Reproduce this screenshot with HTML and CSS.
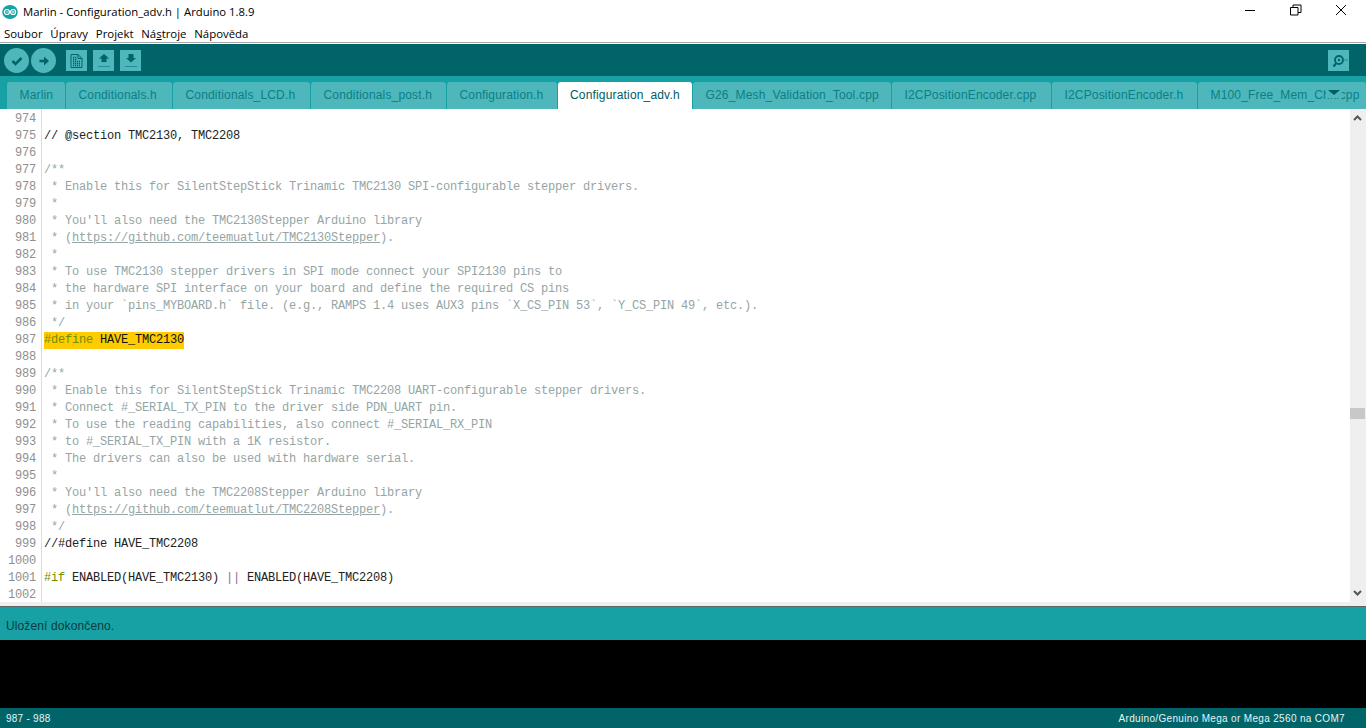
FILE: index.html
```html
<!DOCTYPE html>
<html lang="cs">
<head>
<meta charset="utf-8">
<title>Marlin - Configuration_adv.h | Arduino 1.8.9</title>
<link rel="stylesheet" href="styles.css">
</head>
<body>
<div class="app">
  <header class="titlebar">
    <svg class="logo" width="16" height="16" viewBox="0 0 16 16"><ellipse cx="8" cy="8" rx="7.800" ry="7" fill="#17a1a5"/><circle cx="4.900" cy="8" r="2.500" fill="none" stroke="#fff" stroke-width="1.200"/><circle cx="11.100" cy="8" r="2.500" fill="none" stroke="#fff" stroke-width="1.200"/><path d="M3.800 8h2.200M10 8h2.200M11.100 6.900v2.200" stroke="#fff" stroke-width=".8"/></svg>
    <span class="title">Marlin - Configuration_adv.h | Arduino 1.8.9</span>
    <div class="winbtns">
      <svg width="12" height="12" viewBox="0 0 12 12"><path d="M0 6.500h10" stroke="#000"/></svg>
      <svg width="12" height="12" viewBox="0 0 12 12"><path d="M.5 3.500h7.500v7.500H.5zM3 3.500V1h8v7.500H8" fill="none" stroke="#000"/></svg>
      <svg width="12" height="12" viewBox="0 0 12 12"><path d="M1 1l10 10M11 1L1 11" stroke="#000"/></svg>
    </div>
  </header>
  <nav class="menubar">
    <span>Soubor</span><span>Úpravy</span><span>Projekt</span><span>Ná<u>s</u>troje</span><span>Nápověda</span>
  </nav>
  <div class="toolbar">
    <button class="tool round"><svg width="12" height="12" viewBox="0 0 12 12"><path d="M1.500 6l3 3 6-6" fill="none" stroke="#006468" stroke-width="2.500"/></svg></button>
    <button class="tool round"><svg width="12" height="12" viewBox="0 0 12 12"><path d="M1.500 6h6" stroke="#006468" stroke-width="2.600"/><path d="M6 1.500L11 6l-5 4.500z" fill="#006468"/></svg></button>
    <button class="tool square first"><svg width="13" height="14" viewBox="0 0 13 14"><path d="M1 .5h7l4 4v9H1z" fill="none" stroke="#006468"/><path d="M8 .5v4h4" fill="none" stroke="#006468"/><path d="M3 3.500h4M3 5.500h4M3 7.500h7M3 9.500h7M3 11.500h7" stroke="#006468" stroke-width="1.300" stroke-dasharray="1.200 .8"/></svg></button>
    <button class="tool square"><svg width="14" height="15" viewBox="0 0 14 15"><path d="M7 1l5 4.500H9.500V9h-5V5.500H2z" fill="#006468"/><path d="M1.500 13.500h11" stroke="#006468" stroke-dasharray="1 1"/></svg></button>
    <button class="tool square"><svg width="14" height="15" viewBox="0 0 14 15"><path d="M7 9.500l5-4.500H9.500V1h-5v4H2z" fill="#006468"/><path d="M1.500 13.500h11" stroke="#006468" stroke-dasharray="1 1"/></svg></button>
    <button class="tool square monitor"><svg width="18" height="18" viewBox="0 0 18 18"><circle cx="9" cy="8" r="4" fill="none" stroke="#006468" stroke-width="1.800"/><circle cx="9" cy="8" r="1.200" fill="#006468"/><path d="M6 11.500L3.500 14.500" stroke="#006468" stroke-width="2.200"/><path d="M14.500 8h3" stroke="#006468" stroke-dasharray="1 1"/></svg></button>
  </div>
  <div class="tabs">
    <div class="tab w1">Marlin</div>
    <div class="tab w2">Conditionals.h</div>
    <div class="tab w3">Conditionals_LCD.h</div>
    <div class="tab w4">Conditionals_post.h</div>
    <div class="tab w5">Configuration.h</div>
    <div class="tab active w6">Configuration_adv.h</div>
    <div class="tab w7">G26_Mesh_Validation_Tool.cpp</div>
    <div class="tab w8">I2CPositionEncoder.cpp</div>
    <div class="tab w9">I2CPositionEncoder.h</div>
    <div class="tab last">M100_Free_Mem_Chk.cpp</div>
    <div class="tabmenu"><i></i></div>
  </div>
  <main class="editor">
    <pre class="gutter">974
975
976
977
978
979
980
981
982
983
984
985
986
987
988
989
990
991
992
993
994
995
996
997
998
999
1000
1001
1002</pre>
    <pre class="code"><span class="line"> </span>
<span class="line">// @section TMC2130, TMC2208</span>
<span class="line"> </span>
<span class="line c">/**</span>
<span class="line c"> * Enable this for SilentStepStick Trinamic TMC2130 SPI-configurable stepper drivers.</span>
<span class="line c"> *</span>
<span class="line c"> * You'll also need the TMC2130Stepper Arduino library</span>
<span class="line c"> * (<u>https://github.com/teemuatlut/TMC2130Stepper</u>).</span>
<span class="line c"> *</span>
<span class="line c"> * To use TMC2130 stepper drivers in SPI mode connect your SPI2130 pins to</span>
<span class="line c"> * the hardware SPI interface on your board and define the required CS pins</span>
<span class="line c"> * in your `pins_MYBOARD.h` file. (e.g., RAMPS 1.4 uses AUX3 pins `X_CS_PIN 53`, `Y_CS_PIN 49`, etc.).</span>
<span class="line c"> */</span>
<span class="line"><span class="sel"><b>#define</b> HAVE_TMC2130</span></span>
<span class="line"> </span>
<span class="line c">/**</span>
<span class="line c"> * Enable this for SilentStepStick Trinamic TMC2208 UART-configurable stepper drivers.</span>
<span class="line c"> * Connect #_SERIAL_TX_PIN to the driver side PDN_UART pin.</span>
<span class="line c"> * To use the reading capabilities, also connect #_SERIAL_RX_PIN</span>
<span class="line c"> * to #_SERIAL_TX_PIN with a 1K resistor.</span>
<span class="line c"> * The drivers can also be used with hardware serial.</span>
<span class="line c"> *</span>
<span class="line c"> * You'll also need the TMC2208Stepper Arduino library</span>
<span class="line c"> * (<u>https://github.com/teemuatlut/TMC2208Stepper</u>).</span>
<span class="line c"> */</span>
<span class="line">//#define HAVE_TMC2208</span>
<span class="line"> </span>
<span class="line"><b>#if</b> ENABLED(HAVE_TMC2130) <em>||</em> ENABLED(HAVE_TMC2208)</span>
<span class="line"> </span></pre>
    <div class="scrollbar">
      <svg width="15" height="16" viewBox="0 0 15 16"><path d="M4 11l3.500-3.500 3.500 3.500" fill="none" stroke="#555" stroke-width="2"/></svg>
      <div class="track"><div class="thumb"></div></div>
      <svg width="15" height="16" viewBox="0 0 15 16"><path d="M4 5l3.500 3.500L11 5" fill="none" stroke="#555" stroke-width="2"/></svg>
    </div>
  </main>
  <div class="divider"></div>
  <div class="status">Uložení dokončeno.</div>
  <div class="console"></div>
  <footer class="footer"><span class="pos">987 - 988</span><span class="board">Arduino/Genuino Mega or Mega 2560 na COM7</span></footer>
</div>
</body>
</html>
```
FILE: styles.css
```css
* { box-sizing: border-box; }
html, body { margin: 0; padding: 0; height: 100%; overflow: hidden; background: #fff; }
.app { width: 1366px; height: 728px; display: flex; flex-direction: column; font-family: "Liberation Sans", Arial, sans-serif; }

.titlebar { height: 23px; display: flex; align-items: center; padding-left: 2px; background: #fff; flex: none; }
.logo { flex: none; }
.title { margin-left: 5px; font-size: 11.3px; color: #000; font-family: "Open Sans", "Liberation Sans", sans-serif; }
.winbtns { margin-left: auto; display: flex; gap: 33px; padding-right: 19px; margin-top: -3px; }

.menubar { height: 19px; display: flex; gap: 7.800px; padding: 1px 0 0 4px; align-items: center; font-size: 11.4px; font-family: "Open Sans", "Liberation Sans", sans-serif; color: #000; flex: none; }

.toolbar { height: 34px; background: #006468; border-top: 1px solid #a9a9a9; box-shadow: inset 0 1px 0 #fff; display: flex; align-items: center; padding: 2px 0 0 4px; flex: none; }
.tool { border: 0; padding: 0; background: #4db7bb; display: flex; align-items: center; justify-content: center; flex: none; }
.round { width: 25px; height: 25px; border-radius: 50%; margin-right: 2px; }
.square { width: 21px; height: 21px; margin-right: 6px; }
.first { margin-left: 8px; }
.monitor { margin: 0 17px 0 auto; }

.tabs { height: 33px; background: #17a1a5; display: flex; align-items: flex-end; gap: 1px; padding-left: 7px; flex: none; position: relative; overflow: hidden; }
.tab { height: 27px; background: #4db7bb; color: #0a8085; border-radius: 3px 3px 0 0; font-size: 12px; letter-spacing: .17px; display: flex; align-items: center; padding: 0 0 2px 12.500px; white-space: nowrap; flex: none; }
.tab.active { background: #fff; color: #005c5f; padding-left: 12px; }
.w1 { width: 58px; } .w2 { width: 106px; } .w3 { width: 137px; } .w4 { width: 135px; } .w5 { width: 110px; }
.w6 { width: 134px; } .w7 { width: 198px; } .w8 { width: 159px; } .w9 { width: 145px; }
.last { flex: 1; }
.tabmenu { position: absolute; left: 1326px; top: 6px; width: 16px; height: 16px; background: #4db7bb; display: flex; padding: 8px 0 0 2px; }
.tabmenu i { width: 0; height: 0; border-left: 6px solid transparent; border-right: 6px solid transparent; border-top: 5px solid #005c5f; }

.editor { height: 493px; display: flex; background: #fff; flex: none; overflow: hidden; }
.gutter, .code { margin: 0; padding-top: 2px; font-family: "Liberation Mono", "Courier New", monospace; font-size: 12px; letter-spacing: -.2px; line-height: 17px; }
.gutter { width: 42px; flex: none; text-align: right; padding-right: 5px; color: #8f8f8f; border-right: 1px solid #dcdcdc; background: #fff; }
.code { flex: 1; padding-left: 2px; color: #222; min-width: 0; }
.c { color: #95a5a6; }
.code u { text-decoration: underline; }
.code b { font-weight: normal; color: #728e00; }
.code em { font-style: normal; color: #8f6a8f; }
.sel { background: #ffcc00; display: inline-block; color: #111; }

.scrollbar { width: 16px; flex: none; background: #efefef; display: flex; flex-direction: column; padding-right: 1px; }
.scrollbar svg { flex: none; display: block; }
.track { flex: 1; position: relative; }
.thumb { position: absolute; left: 0; right: 0; top: 283px; height: 11px; background: #c8c8c8; }

.divider { height: 5px; background: #efefef; border-bottom: 1px solid #5c6566; flex: none; }
.status { height: 33px; background: #17a1a5; color: #0a3c3e; font-size: 12px; display: flex; align-items: center; padding: 4px 0 0 6px; letter-spacing: .12px; flex: none; }
.console { flex: 1; background: #000; }
.footer { height: 20px; background: #006468; color: #e6f4f4; font-size: 10px; display: flex; align-items: center; justify-content: space-between; padding: 1px 21px 0 6px; letter-spacing: .33px; flex: none; }
.pos { letter-spacing: .25px; }
```
